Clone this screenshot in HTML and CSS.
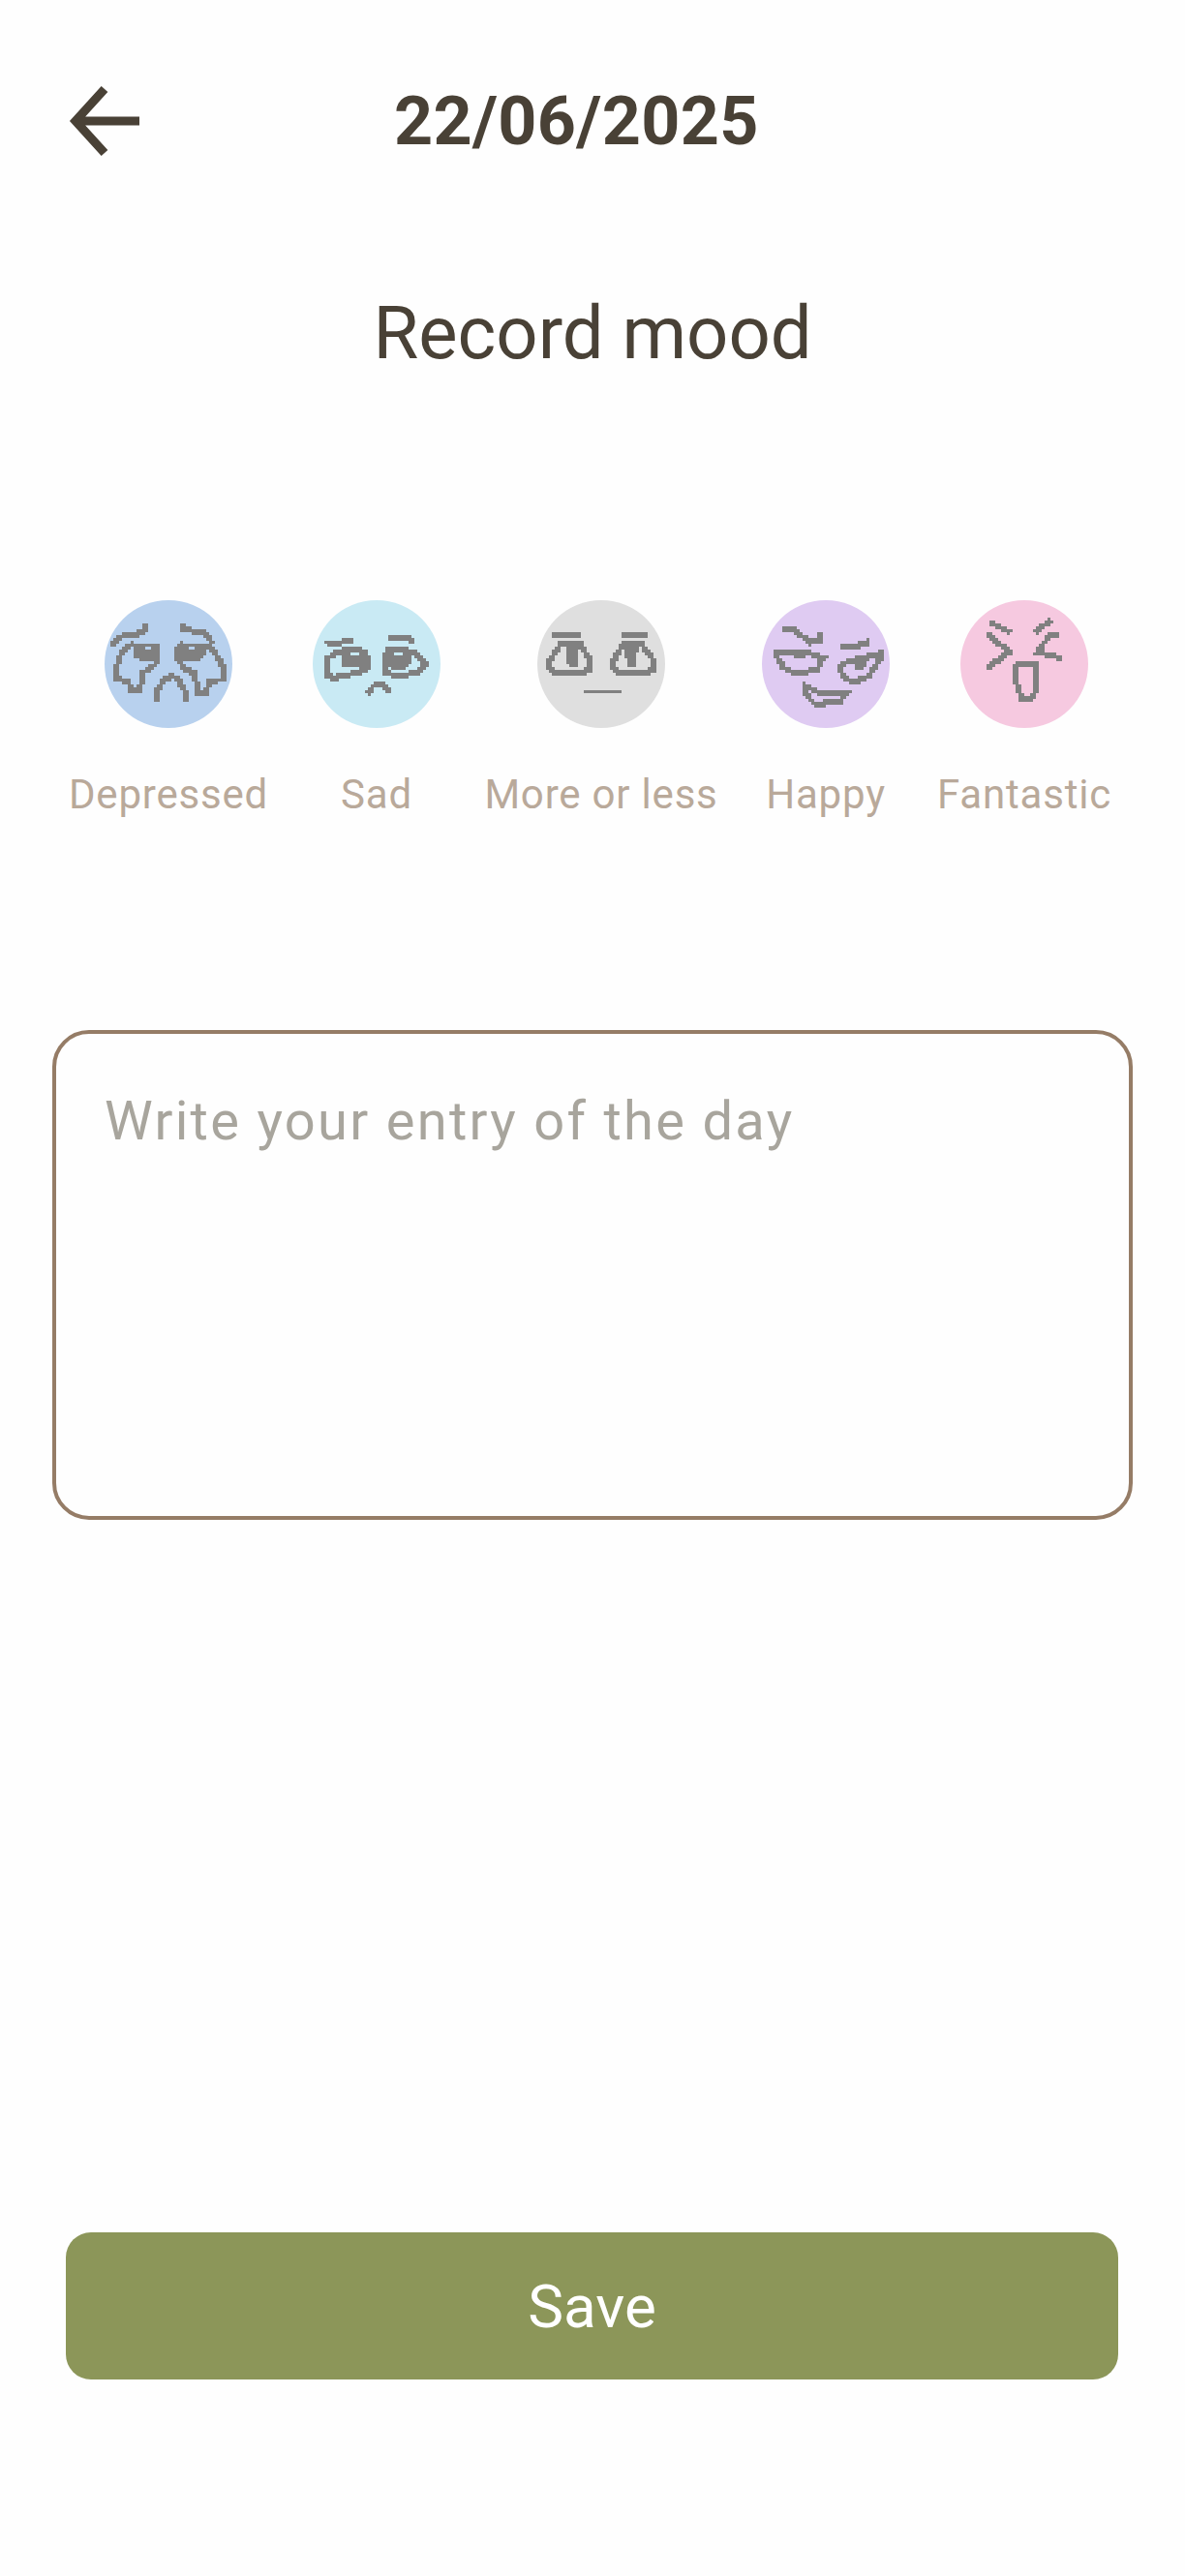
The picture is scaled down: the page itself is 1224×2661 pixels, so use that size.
FILE: index.html
```html
<!DOCTYPE html>
<html lang="en">
<head>
<meta charset="utf-8">
<title>Record mood</title>
<link rel="stylesheet" href="styles.css">
</head>
<body>
<svg class="defs" width="0" height="0" aria-hidden="true">
  <filter id="pix" x="0" y="0" width="100%" height="100%" color-interpolation-filters="sRGB">
    <feFlood x="1" y="1" width="1" height="1" flood-color="#000"/>
    <feComposite width="3" height="3"/>
    <feTile result="grid"/>
    <feComposite in="SourceGraphic" in2="grid" operator="in"/>
    <feComponentTransfer>
      <feFuncA type="discrete" tableValues="0 1 1"/>
    </feComponentTransfer>
    <feMorphology operator="dilate" radius="1"/>
  </filter>
</svg>
<main class="page">
  <header class="topbar">
    <svg class="back" viewBox="0 0 73 72"><path d="M73 36H8M37 3 7 36l30 33"/></svg>
    <h1 class="date">22/06/2025</h1>
  </header>
  <h2 class="heading">Record mood</h2>
  <section class="moods">
    <div class="mood">
      <div class="disc depressed">
        <svg class="face" viewBox="27 15 394 394">
          <path class="ln" d="M48 152 75 128l55-10 25-13V85M120 145 90 165 72 190l-7 30v38l35 7 8 30h27l10-55 25-15 25-25M272 85v20l63 10 25 35M335 150l35 30 22 40-2 40-40 5-10 33h-25l-10-58-30-15-25-30 5-35 15-15M192 325v-35l18-28 25-14 20 14 20 33v30"/>
          <path class="fill" d="M118 146h80v42l-15 12h-48l-17-12zM150 155v9h24v-9zM260 146h77v42l-15 12h-48l-14-12zM285 155v9h20v-9z"/>
        </svg>
      </div>
      <span class="label">Depressed</span>
    </div>
    <div class="mood">
      <div class="disc sad">
        <svg class="face" viewBox="24 15 394 394">
          <path class="ln" d="M65 152l35-4 50-10M65 235v-35l30-22 35-13h40l25 25v35l-35 15-70 15-25-10zM258 130l62 3 15 15M245 195l10-25 45-5 40 15 30 32-25 28-65 8-35-13zM192 303l18-22 15-9 20 6 17 25"/>
          <path class="fill" d="M112 165h78v50l-25 8h-35l-18-8zM140 175v13h26v-13zM245 170h80v45l-20 12h-40l-20-12zM278 178v11h23v-11z"/>
        </svg>
      </div>
      <span class="label">Sad</span>
    </div>
    <div class="mood">
      <div class="disc meh">
        <svg class="face" viewBox="33 15 394 394">
          <path class="ln" d="M80 124h85M290 124h85M70 225v-20l35-55h60l33 55v20l-18 10H80zM265 225v-20l35-55h55l40 55v20l-15 10H280zM175 297h120"/>
          <path class="fill" d="M122 150h43l-10 68h-27zM300 150h45l-10 68h-25z"/>
        </svg>
      </div>
      <span class="label">More or less</span>
    </div>
    <div class="mood">
      <div class="disc happy">
        <svg class="face" viewBox="22 15 394 394">
          <path class="ln" d="M82 102h33l55 43 30-5 5-28M70 175l80-3 62 23-22 35-60 12-40-17-20-35zM265 150l10 12 45-7 35-13M385 180l-85 20-35 15 5 35 35 18 45-18 35-50zM155 280l45 20 88-2-28 32-75 5-33-35z"/>
          <path class="fill" d="M115 175h50l-15 23-25-3zM300 205l50-10-15 33h-25z"/>
        </svg>
      </div>
      <span class="label">Happy</span>
    </div>
    <div class="mood mood-end">
      <div class="disc fantastic">
        <svg class="face" viewBox="25 15 394 394">
          <path class="ln" d="M118 85l62 30M108 120l70 55-73 50M305 78l-53 37M328 122l-28 3-38 50 76 20M192 225l13-13h55l-5 28v60l-15 18h-25l-15-33-2-45z"/>
        </svg>
      </div>
      <span class="label">Fantastic</span>
    </div>
  </section>
  <div class="entry">Write your entry of the day</div>
  <div class="save">Save</div>
</main>
</body>
</html>
```

FILE: styles.css
```css
* { box-sizing: border-box; margin: 0; padding: 0; }
html, body { background: #fefefe; }
body { font-family: Roboto, "Noto Sans", sans-serif; color: #494136; }
.defs { position: absolute; }
.page { width: 1224px; height: 2661px; overflow: hidden; display: flex; flex-direction: column; }

.topbar { display: flex; align-items: center; height: 72px; margin-top: 89px; padding-left: 71px; }
.back { width: 73px; height: 72px; flex: none; }
.back path { fill: none; stroke: #494136; stroke-width: 9; stroke-linecap: butt; stroke-linejoin: miter; }
.date { margin-left: 263px; font-size: 70px; line-height: 72px; font-weight: 700; letter-spacing: .35px; white-space: nowrap; }

.heading { margin-top: 139px; height: 88px; font-size: 76px; line-height: 88px; font-weight: 400; text-align: center; }

.moods { display: grid; grid-template-columns: 206px 132px 240px 132px 183px; column-gap: 46px; margin-top: 232px; padding-left: 71px; }
.mood { display: flex; flex-direction: column; align-items: center; }
.mood-end { justify-self: end; }
.disc { width: 132px; height: 132px; border-radius: 50%; }
.face { display: block; width: 132px; height: 132px; filter: url(#pix); }
.ln { fill: none; stroke: #808080; stroke-width: 17; }
.fill { fill: #808080; fill-rule: evenodd; }
.depressed { background: #b8d1ee; }
.sad { background: #c9eaf4; }
.meh { background: #dfdfdf; }
.happy { background: #dfcbf2; }
.fantastic { background: #f6c9e0; }
.label { margin-top: 44px; height: 50px; font-size: 42px; line-height: 50px; font-weight: 400; letter-spacing: .8px; color: #b9a99a; white-space: nowrap; }

.entry { width: 1116px; height: 506px; margin: 218px 0 0 54px; padding: 52px 50px; border: 4px solid #957c66; border-radius: 38px; font-size: 56px; line-height: 76px; font-weight: 400; color: #a8a59d; letter-spacing: 2.3px; }

.save { display: flex; align-items: center; justify-content: center; width: 1087px; height: 152px; margin: 736px 0 0 68px; border-radius: 26px; background: #8c9659; color: #fff; font-size: 62px; }
```
